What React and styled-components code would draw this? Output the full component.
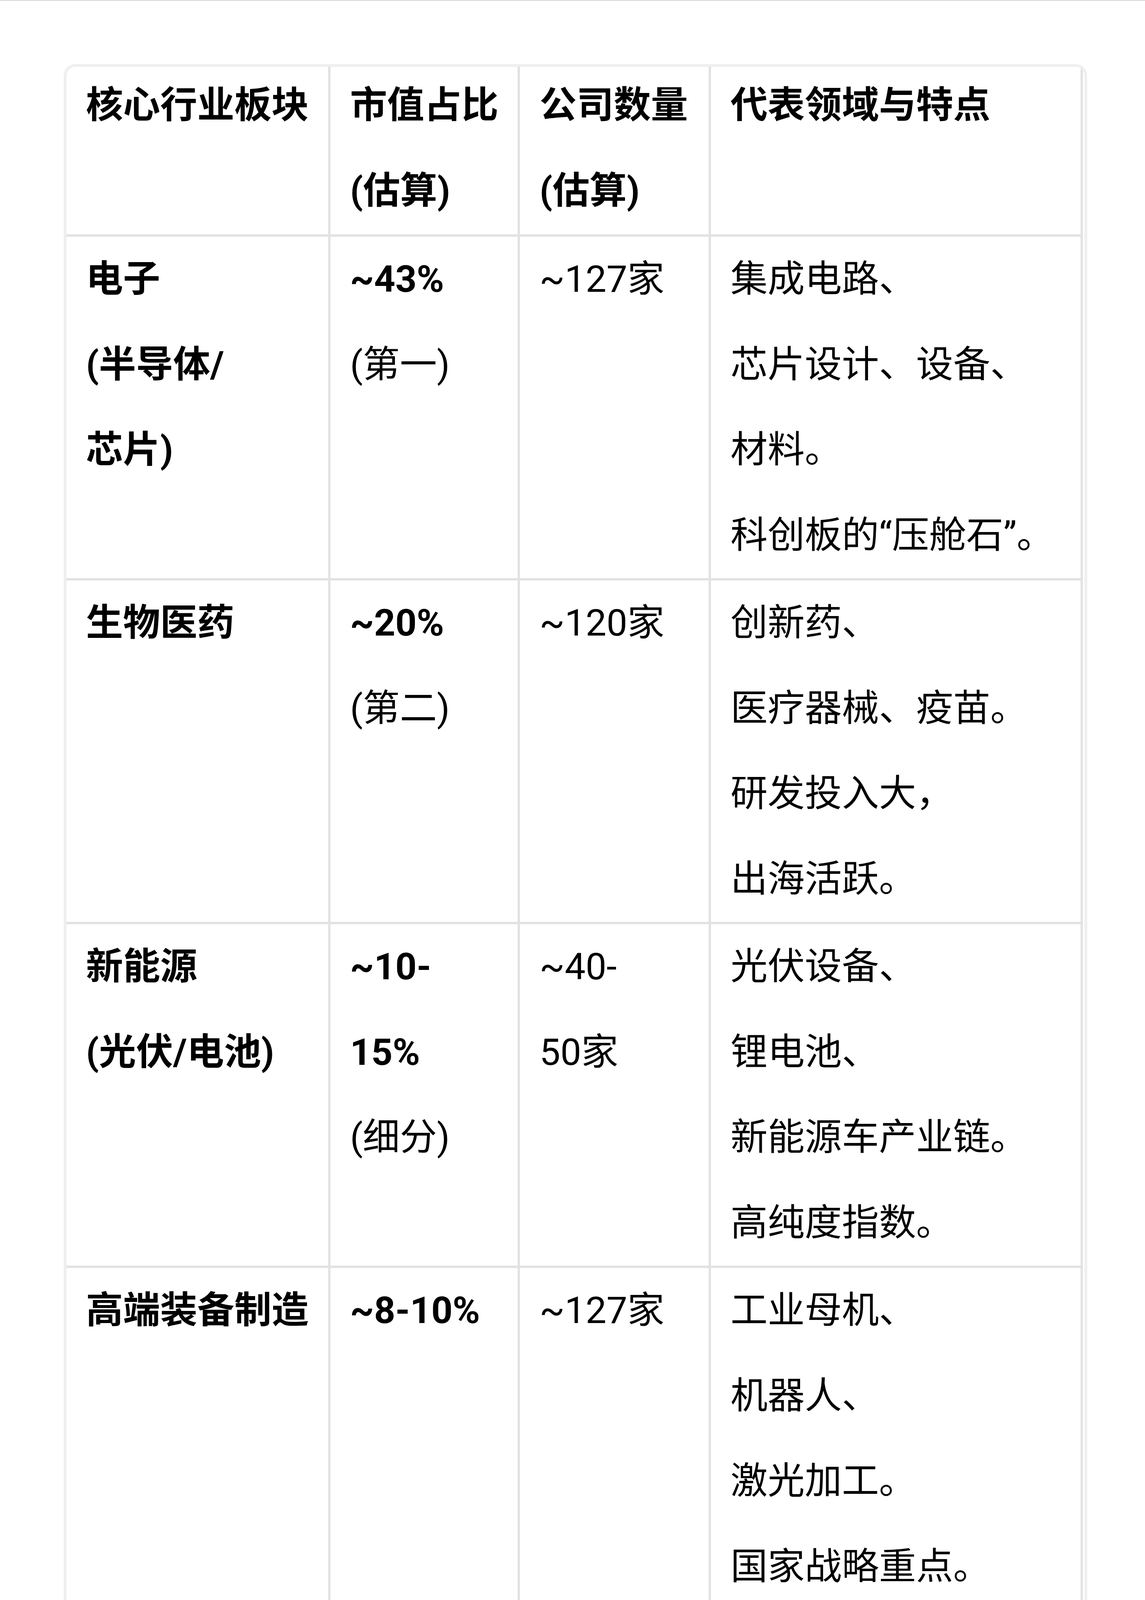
import React from 'react';
import styled, { createGlobalStyle } from 'styled-components';

const GlobalStyle = createGlobalStyle`
  html, body {
    margin: 0;
    padding: 0;
    background: #ffffff;
  }
`;

const Page = styled.div`
  position: relative;
  width: 2931px;
  height: 5253px;
  box-sizing: border-box;
  border-top: 2px solid #d4d4d4;
  padding: 162px 0 0 163px;
  overflow: hidden;
  font-family: "Roboto", "Noto Sans CJK SC", sans-serif;
  color: #000;
`;

const TableWrap = styled.div`
  width: 2620px;
  box-sizing: border-box;
  border: 7px solid #efefef;
  border-radius: 30px;
  overflow: hidden;
  background: #fff;
`;

const Grid = styled.div`
  display: grid;
  grid-template-columns: 676px 485px 489px 952px;
`;

const Cell = styled.div`
  box-sizing: border-box;
  padding: 0 50px;
  border-right: 6px solid #e2e2e2;
  border-bottom: ${(p) => (p.$last ? 'none' : '6px solid #e2e2e2')};
`;

const CellText = styled.div`
  margin: ${(p) => (p.$head ? '-10px 0 2px' : '0')};
`;

const Line = styled.div`
  font-size: 95px;
  line-height: 218.5px;
  white-space: nowrap;
  font-weight: ${(p) => (p.$bold ? 700 : 400)};
`;

const WatermarkBand = styled.div`
  position: absolute;
  left: 2247px;
  top: 5142px;
  width: 658px;
  height: 82px;
  border-radius: 12px;
  background: linear-gradient(to bottom, rgba(246, 246, 246, 0.9), rgba(252, 252, 252, 0.95));
  box-shadow: 0 0 8px rgba(0, 0, 0, 0.1);
  filter: blur(1.5px);

  &::after {
    content: '';
    position: absolute;
    left: 0;
    right: 0;
    top: 36px;
    height: 10px;
    border-radius: 5px;
    background: #fff;
    box-shadow: 0 0 4px rgba(0, 0, 0, 0.12);
  }
`;

const WatermarkSmear = styled.div`
  position: absolute;
  left: 2265px;
  top: 5128px;
  width: 77px;
  height: 93px;
  background: linear-gradient(to right, rgba(110, 110, 110, 0.45), rgba(150, 150, 150, 0.35) 70%, rgba(210, 210, 210, 0.2));
  filter: blur(3px);
`;

// each cell: list of lines, a line is [text, bold]
const header = [
  [['核心行业板块', true]],
  [['市值占比', true], ['(估算)', true]],
  [['公司数量', true], ['(估算)', true]],
  [['代表领域与特点', true]],
];

const rows = [
  [
    [['电子', true], ['(半导体/', true], ['芯片)', true]],
    [['~43%', true], ['(第一)']],
    [['~127家']],
    [['集成电路、'], ['芯片设计、设备、'], ['材料。'], ['科创板的“压舱石”。']],
  ],
  [
    [['生物医药', true]],
    [['~20%', true], ['(第二)']],
    [['~120家']],
    [['创新药、'], ['医疗器械、疫苗。'], ['研发投入大，'], ['出海活跃。']],
  ],
  [
    [['新能源', true], ['(光伏/电池)', true]],
    [['~10-', true], ['15%', true], ['(细分)']],
    [['~40-'], ['50家']],
    [['光伏设备、'], ['锂电池、'], ['新能源车产业链。'], ['高纯度指数。']],
  ],
  [
    [['高端装备制造', true]],
    [['~8-10%', true]],
    [['~127家']],
    [['工业母机、'], ['机器人、'], ['激光加工。'], ['国家战略重点。']],
  ],
  [
    [['计算机/', true], ['信息技术', true]],
    [['~8%', true]],
    [['~60家']],
    [['AI、软件、EDA。'], ['与半导体、'], ['AI应用紧密结合。']],
  ],
  [
    [['其他', true]],
    [['~10%', true]],
    [['-']],
    [['包括新材料、'], ['节能环保等']],
  ],
];

const renderCell = (lines, key, head, last) => (
  <Cell key={key} $last={last}>
    <CellText $head={head}>
      {lines.map(([text, bold], i) => (
        <Line key={i} $bold={bold}>{text}</Line>
      ))}
    </CellText>
  </Cell>
);

const App = () => (
  <Page>
    <GlobalStyle />
    <TableWrap>
      <Grid>
        {header.map((lines, i) => renderCell(lines, `h${i}`, true, false))}
        {rows.map((row, r) =>
          row.map((lines, c) =>
            renderCell(lines, `r${r}c${c}`, false, r === rows.length - 1)
          )
        )}
      </Grid>
    </TableWrap>
    <WatermarkBand />
    <WatermarkSmear />
  </Page>
);

export default App;
